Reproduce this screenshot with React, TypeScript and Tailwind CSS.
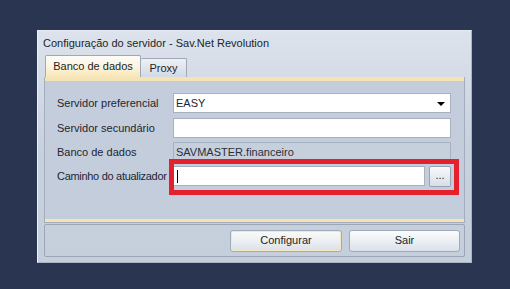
export default function App() {
  const font = { fontFamily: '"Liberation Sans", Arial, sans-serif' };
  return (
    <div className="h-[289px] w-[510px] bg-[#2a3651] pl-[37px] pt-[30px]" style={font}>
      <div className="flex h-[233px] w-[435px] flex-col border border-l-[#eef1f6] border-t-[#e6eaf1] border-r-[#aab4c4] border-b-[#aab4c4] bg-gradient-to-b from-[#dde3ec] via-[#c8d1de] to-[#c5cfdc]">
        {/* title */}
        <div className="flex h-[24px] items-center pl-[5px] text-[11px] text-[#1b1f28]">
          Configuração do servidor - Sav.Net Revolution
        </div>
        {/* tabs */}
        <div className="flex h-[22px] items-end pl-[7px]">
          <div className="flex h-[22px] w-[96px] items-center justify-center rounded-t-[2px] border border-b-0 border-[#9ea8b8] bg-gradient-to-b from-[#fdfcf8] via-[#fcf4df] to-[#f8e6b6] text-[11px] text-[#1b1f28]">
            Banco de dados
          </div>
          <div className="flex h-[19px] w-[46px] items-center justify-center rounded-t-[2px] border border-b-0 border-l-0 border-[#9ea8b8] bg-gradient-to-b from-[#eef1f5] to-[#d3dae4] text-[11px] text-[#1b1f28]">
            Proxy
          </div>
        </div>
        {/* panel */}
        <div className="mx-[6px] flex h-[146px] flex-col border-x border-[#a3adbd] bg-[#c3cddb]">
          <div className="h-[4px] bg-[#f4e3b5]" />
          <div className="flex flex-1 flex-col gap-[4px] pl-[12px] pt-[12px] text-[11px] text-[#1f2533]">
            <div className="mb-[1px] flex h-[20px] items-center">
              <span className="w-[116px]">Servidor preferencial</span>
              <div className="relative flex h-[20px] w-[278px] items-center border border-[#a7b1c0] bg-white pl-[2px]">
                EASY
                <span className="absolute right-[5px] top-[8px] h-0 w-0 border-x-[4px] border-t-[4px] border-x-transparent border-t-black" />
              </div>
            </div>
            <div className="flex h-[20px] items-center">
              <span className="w-[116px]">Servidor secundário</span>
              <div className="h-[20px] w-[278px] border border-[#a7b1c0] bg-white" />
            </div>
            <div className="flex h-[20px] items-center">
              <span className="w-[116px]">Banco de dados</span>
              <div className="flex h-[20px] w-[278px] items-center border border-[#a7b1c0] bg-[#c6d0dd] pl-[2px] text-[#2a2f3a]">
                SAVMASTER.financeiro
              </div>
            </div>
            <div className="flex h-[20px] items-center">
              <span className="w-[116px] whitespace-nowrap tracking-[-0.3px]">Caminho do atualizador</span>
              <div className="relative flex items-center gap-[4px]">
                <div className="pointer-events-none absolute -left-[4px] -top-[7px] h-[36px] w-[290px] border-[5px] border-[#e4202c]" />
                <div className="flex h-[20px] w-[252px] items-center border border-[#a7b1c0] bg-white pl-[3px]">
                  <span className="h-[13px] w-[1px] bg-black" />
                </div>
                <div className="flex h-[21px] w-[22px] items-center justify-center rounded-[2px] border border-[#98a3b5] bg-gradient-to-b from-[#f8f9fb] to-[#d8dee7] pb-[2px] text-[11px] leading-none">
                  ...
                </div>
              </div>
            </div>
          </div>
          <div className="h-[3px] bg-[#f4e3b5]" />
          <div className="h-[1px] bg-[#a3adbd]" />
        </div>
        {/* buttons */}
        <div className="mx-[6px] mt-[1px] flex h-[33px] items-center justify-end gap-[7px] rounded-[2px] border border-[#9ba6b7] pr-[4px]">
          <button className="h-[22px] w-[112px] rounded-[3px] border border-[#a0aabb] bg-gradient-to-b from-[#fbfbf8] via-[#eceff3] to-[#dbe0e8] text-[11px] text-[#1b1f28] shadow-[inset_0_0_0_1px_#f3e7c6]">
            Configurar
          </button>
          <button className="h-[22px] w-[111px] rounded-[3px] border border-[#a0aabb] bg-gradient-to-b from-[#fbfcfd] via-[#eceff3] to-[#dbe0e8] text-[11px] text-[#1b1f28]">
            Sair
          </button>
        </div>
      </div>
    </div>
  );
}
